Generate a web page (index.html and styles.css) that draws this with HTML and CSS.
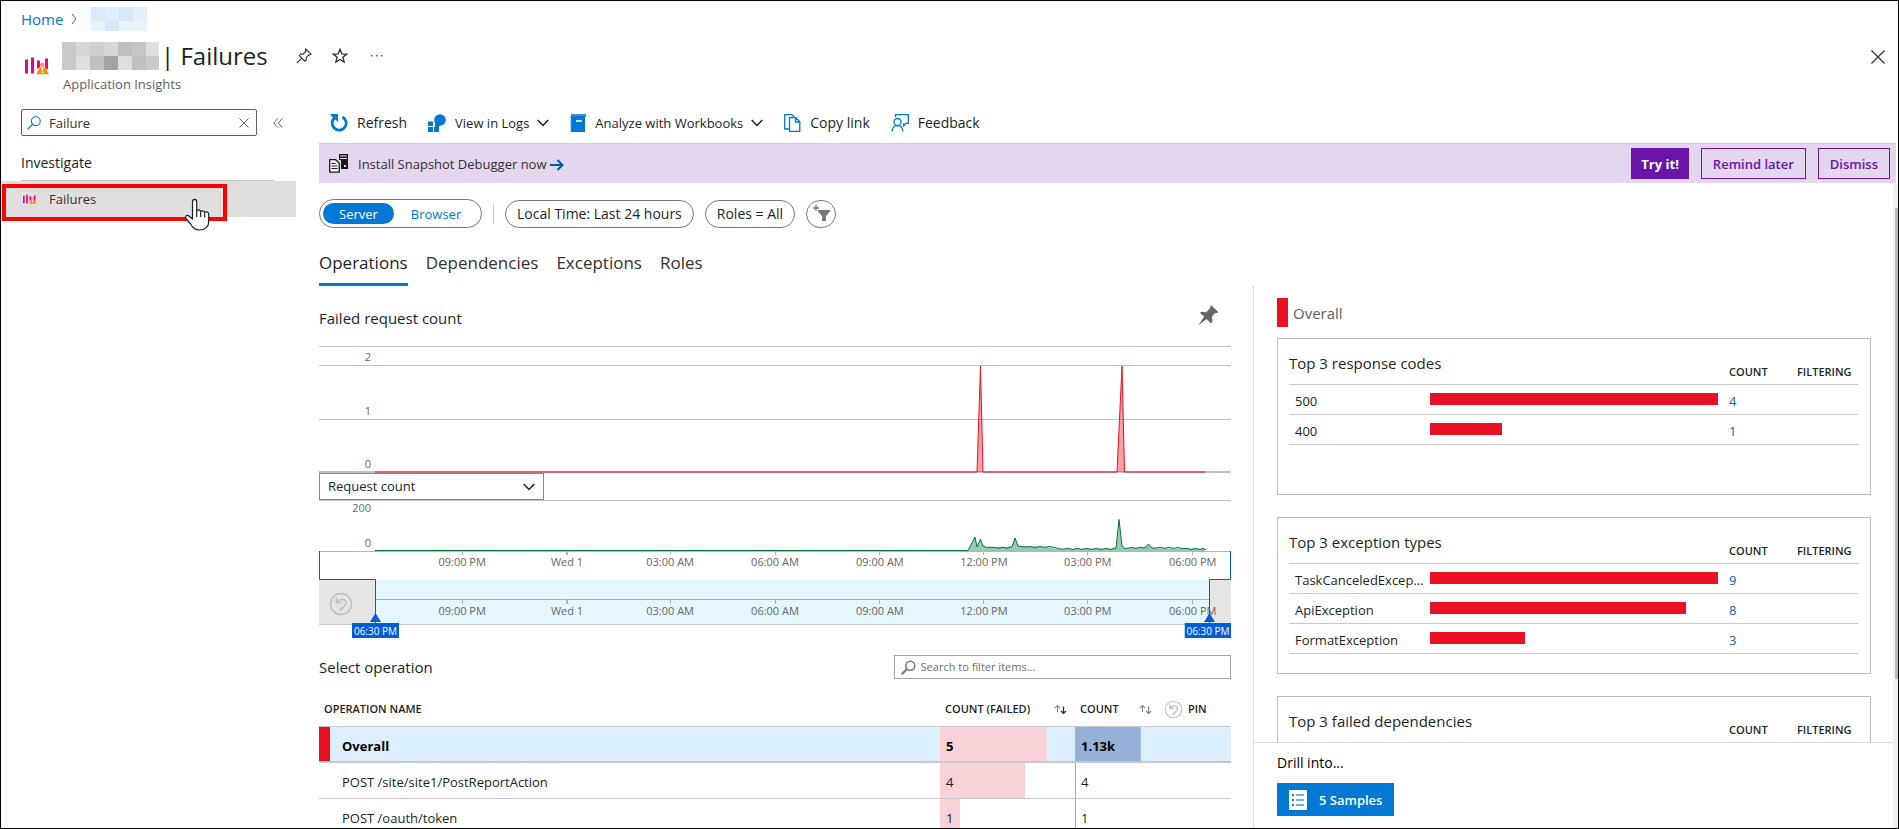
FILE: index.html
```html
<!DOCTYPE html>
<html lang="en">
<head>
<meta charset="utf-8">
<title>Failures - Application Insights</title>
<link rel="stylesheet" href="styles.css">
</head>
<body>
<svg class="defs" aria-hidden="true">
  <defs>
    <symbol id="i-insights" viewBox="0 0 24 18">
      <path fill="#ec008c" d="M0 3h3v14H0zM6 1h3v16H6zM12 4h3v8h-3zM15 8l2.500-2 2 2-2 2zM20 2h3v11h-3z"/>
      <path fill="#ff8c00" stroke="#fff" stroke-width=".5" d="M17.500 6.500L24 17q0 1-1 1H12q-1.200 0-.8-1z"/>
      <path stroke="#fff" stroke-width="1.600" d="M17.500 10v4M17.500 15v1.500"/>
    </symbol>
    <symbol id="i-chevron" viewBox="0 0 12 8"><path fill="none" stroke="#201f1e" stroke-width="1.500" d="M.7 1l5.300 5.500L11.300 1"/></symbol>
    <symbol id="i-sort" viewBox="0 0 13 9"><path fill="none" stroke="#8a8886" stroke-width="1.100" d="M3.500 7V.8M.8 3.200L3.500.6l2.700 2.600"/><path fill="none" stroke="currentColor" stroke-width="1.300" d="M9.500 1.500v6.800M6.900 5.900l2.600 2.600 2.600-2.600"/></symbol>
    <symbol id="i-undo" viewBox="0 0 24 24"><circle cx="12" cy="12" r="10.500" fill="none" stroke="#bdbdbd" stroke-width="1.400"/><path fill="none" stroke="#bdbdbd" stroke-width="1.600" d="M7.500 5.500v5h5M7.800 10c3-3.500 9-3.500 9.200 1 0 2.500-3 4.500-6.500 7.500"/></symbol>
  </defs>
</svg>
<div class="app">
  <header class="top">
    <nav class="crumbs" aria-label="Breadcrumb">
      <a href="#">Home</a>
      <svg width="6" height="12" viewBox="0 0 6 12"><path fill="none" stroke="#605e5c" d="M1 1l4 5-4 5"/></svg>
      <svg class="crumb-mask" width="70" height="24" viewBox="0 0 70 24">
        <path fill="#f8fcfe" d="M0 0h14v24H0z"/><path fill="#d9ebf9" d="M14 0h14v14H14z"/><path fill="#deeefa" d="M28 0h14v14H28z"/><path fill="#d3e9f8" d="M42 0h14v14H42z"/><path fill="#e1f0fb" d="M56 0h14v14H56z"/><path fill="#e9f3fc" d="M14 14h14v10H14zM42 14h28v10H42z"/><path fill="#d3e8f8" d="M28 14h14v10H28z"/>
      </svg>
    </nav>
    <div class="heading">
      <svg class="brand" width="24" height="19"><use href="#i-insights"/></svg>
      <div class="heading-text">
        <div class="title-row">
          <svg width="97" height="28" viewBox="0 0 97 28">
            <path fill="#cacaca" d="M0 0h97v28H0z"/><path fill="#d6d6d6" d="M14 0h14v14H14zM42 0h14v14H42z"/><path fill="#cfcfcd" d="M28 0h14v14H28z"/><path fill="#bfbfbf" d="M56 0h14v14H56z"/><path fill="#c5c5c3" d="M70 0h14v14H70z"/><path fill="#dedede" d="M84 0h13v14H84zM14 14h14v14H14zM56 14h14v14H56z"/><path fill="#c0c0be" d="M28 14h14v14H28zM70 14h14v14H70z"/><path fill="#a3a3a3" d="M42 14h14v14H42z"/>
          </svg>
          <h1>| Failures</h1>
          <button class="icon-btn" aria-label="Pin"><svg width="16" height="16" viewBox="0 0 16 16"><path fill="none" stroke="#323130" stroke-width="1.100" d="M9.800 1l5.200 5.200-1.200.8-1-.2-2.600 2.800.2 2.400-1.500 1.200-5.600-5.600L4.600 6l2.500.2 2.700-2.700-.4-1.200zM5.800 10.200L.8 15.200"/></svg></button>
          <button class="icon-btn star" aria-label="Favorite"><svg width="16" height="16" viewBox="0 0 16 16"><path fill="none" stroke="#323130" stroke-width="1.300" d="M8 1.300l1.800 4.500 4.900.3-3.800 3.100 1.300 4.900L8 11.400l-4.200 2.700 1.300-4.900L1.300 6.100l4.900-.3z"/></svg></button>
          <button class="icon-btn" aria-label="More"><svg width="14" height="4" viewBox="0 0 14 4"><path fill="#605e5c" d="M1 1h1.500v1.500H1zM6 1h1.500v1.500H6zM11 1h1.500v1.500H11z"/></svg></button>
        </div>
        <p class="subtitle">Application Insights</p>
      </div>
      <button class="icon-btn close" aria-label="Close"><svg width="14" height="14" viewBox="0 0 14 14"><path stroke="#323130" stroke-width="1.200" d="M.5.500l13 13M13.500.500l-13 13"/></svg></button>
    </div>
  </header>

  <div class="body">
    <aside class="side">
      <div class="side-search">
        <label class="search-box">
          <svg width="14" height="14" viewBox="0 0 14 14"><circle cx="8.800" cy="5.200" r="4.400" fill="none" stroke="#0078d4" stroke-width="1.100"/><path stroke="#0078d4" stroke-width="1.300" d="M5.600 8.400L.6 13.400"/></svg>
          <input type="text" value="Failure" aria-label="Search menu">
          <button class="icon-btn" aria-label="Clear"><svg width="10" height="10" viewBox="0 0 10 10"><path stroke="#605e5c" d="M.5.500l9 9M9.500.500l-9 9"/></svg></button>
        </label>
        <button class="icon-btn" aria-label="Collapse menu"><svg width="10" height="10" viewBox="0 0 10 10"><path fill="none" stroke="#605e5c" d="M4.700.5L.7 5l4 4.500M9.300.5l-4 4.500 4 4.500"/></svg></button>
      </div>
      <h2 class="side-group">Investigate</h2>
      <a class="side-item" href="#">
        <svg width="13" height="10"><use href="#i-insights"/></svg>
        <span>Failures</span>
      </a>
      <div class="callout"></div>
      <svg class="pointer" width="26" height="34" viewBox="0 0 26 34"><path fill="#fff" stroke="#1b1b2f" stroke-width="1.200" stroke-linejoin="round" d="M8.500 21V4c0-3.400 4.200-3.400 4.200 0v10c0-3 4-2.600 4 .5 0-2.500 4-2.200 4 .8 0-2.300 4-2 4 1V24c0 5-4 8-9.500 8-4.500 0-7-3-8.700-6L2 20.500c-1.600-2.600 1.500-4.200 3.300-2.200zM12.700 14v5M16.700 15v4M20.700 16v3.500"/></svg>
    </aside>

    <main class="main">
      <div class="toolbar">
        <button><svg width="18" height="18" viewBox="0 0 18 18"><path fill="none" stroke="#0078d4" stroke-width="2.800" d="M12.500 3a7 7 0 1 1-7.500.5"/><path fill="#0078d4" d="M0 0h8v8L5.500 5.500 3 4z"/></svg>Refresh</button>
        <button><svg width="18" height="18" viewBox="0 0 18 18"><circle cx="12" cy="6" r="5.800" fill="#0078d4"/><path fill="#0078d4" d="M7 8l5 3-1 2H7zM0 7.500h5v4.500H0zM0 13h5v5H0zM6 13h5v5H6z"/></svg><span class="drop">View in Logs <svg width="12" height="8"><use href="#i-chevron"/></svg></span></button>
        <button><svg width="16" height="18" viewBox="0 0 16 18"><path fill="#3593e0" d="M1 0h15v3H1z"/><path fill="#0078d4" d="M1 2h14v16H1z"/><path stroke="#3ba0ec" stroke-width="1.200" stroke-dasharray="1.500 1.500" d="M1 3v14"/><path fill="#cfe6f8" d="M6 6h6v2H6z"/></svg><span class="drop">Analyze with Workbooks <svg width="12" height="8"><use href="#i-chevron"/></svg></span></button>
        <button><svg width="17" height="18" viewBox="0 0 17 18"><path fill="none" stroke="#0078d4" stroke-width="1.300" d="M5 15H.7V.7H8l2.500 2.500M5.500 3.700h6.300l4 4v9.600H5.500zM11.500 3.700V8h4.300"/></svg>Copy link</button>
        <button><svg width="18" height="18" viewBox="0 0 18 18"><path fill="none" stroke="#0078d4" stroke-width="1.300" d="M4.500 3V.7h12.800v8.600h-2l-2.600 2.500V9.300M1 17.500c.3-8 10.200-8 11 0"/><circle cx="6.500" cy="8" r="3.500" fill="#fff" stroke="#0078d4" stroke-width="1.300"/></svg>Feedback</button>
      </div>

      <div class="banner">
        <svg width="19" height="19" viewBox="0 0 19 19"><path fill="#1b1a19" d="M10 0h9v15h-7V6h-2z"/><path fill="#e4d6ef" d="M11 1.500h7v1h-7zM11 4h7v1h-7zM15 11h2v2h-2z"/><path fill="#fff" stroke="#1b1a19" stroke-width="1.300" d="M.7 5.700h6l3.500 3.500v9H.7z"/><path stroke="#1b1a19" d="M2.500 9.500h4M2.500 12h6M2.500 14.500h6"/></svg>
        <a href="#">Install Snapshot Debugger now <svg width="14" height="12" viewBox="0 0 14 12"><path fill="none" stroke="#0058ad" stroke-width="2" d="M0 6h12M7.500 1l5 5-5 5"/></svg></a>
        <button class="try">Try it!</button>
        <button>Remind later</button>
        <button>Dismiss</button>
      </div>

      <div class="scroller">
        <div class="content">
          <div class="filters">
            <div class="toggle"><button class="on">Server</button><button>Browser</button></div>
            <span class="sep"></span>
            <button class="pill">Local Time: Last 24 hours</button>
            <button class="pill">Roles = All</button>
            <button class="pill add" aria-label="Add filter"><svg width="17" height="17" viewBox="0 0 17 17"><path stroke="#797775" stroke-width="1.400" d="M0 3h6M3 0v6"/><path fill="#797775" d="M5 5h12v1.500L13 11v5h-4v-5L5 6.500z"/></svg></button>
          </div>
          <nav class="tabs">
            <a class="current" href="#">Operations</a><a href="#">Dependencies</a><a href="#">Exceptions</a><a href="#">Roles</a>
          </nav>

          <div class="split">
            <section class="left">
              <div class="chart-head">
                <h3>Failed request count</h3>
                <button class="icon-btn" aria-label="Pin chart"><svg width="21" height="21" viewBox="0 0 21 21"><path fill="#666" d="M13 0l7.500 7.200-1.300.7-2 0-3.400 4.100.8 4.200-1.800 2-4.200-4.300L.300 20.500l5.800-8.800L2 8l1.200-1.200 5 .4 3.600-3.700z"/></svg></button>
              </div>
              <svg class="chart" height="127">
                <g class="grid-lines"><rect y="0" width="100%" height="1"/><rect y="19" width="100%" height="1"/><rect y="73" width="100%" height="1"/><rect y="125" width="100%" height="2"/></g>
                <svg width="100%" height="127" viewBox="0 0 912 127" preserveAspectRatio="none">
                  <path fill="#e81123" fill-opacity=".4" d="M658 126l3.500-106 2.500 106zM798 126l5-106 2.500 106z"/>
                  <path class="line-red" d="M56 126H658l3.500-106L664 126H798l5-106 2.500 106H886"/>
                </svg>
                <g class="axis end"><text x="52" y="15">2</text><text x="52" y="69">1</text><text x="52" y="122">0</text></g>
              </svg>
              <select class="metric" aria-label="Metric"><option>Request count</option></select>
              <svg class="chart" height="140">
                <g class="grid-lines"><rect y="0" width="100%" height="1"/></g>
                <rect x="0" y="80" width="100%" height="44" fill="#e5e5e5"/>
                <rect x="0" y="124" width="100%" height="1" fill="#c8c8c8"/>
                <svg width="100%" height="140" viewBox="0 0 912 140" preserveAspectRatio="none">
                  <path fill="#e5f7fe" d="M56 80h834v44H56z"/>
                  <path fill="#b5b5b5" d="M0 51h912v1H0z"/>
                  <path fill="#9cb4c0" d="M56 99h834v1H56z"/>
                  <path class="ticks" d="M143.500 52v3M351.500 52v3M456.500 52v3M560.500 52v3M664.500 52v3M768.500 52v3M873.500 52v3"/>
                  <path class="ticks blue" d="M143.500 99v5M351.500 99v5M456.500 99v5M560.500 99v5M664.500 99v5M768.500 99v5M873.500 99v5"/>
                  <path class="ticks wide" d="M248 52v3M248 99v5"/>
                  <path fill="#00783c" fill-opacity=".4" d="M649 51L656 37L658 47L661.500 39L664 46L667 47.500L693 46.500L696 38L699 46L728 47L738 49L797 48.500L800 19.500L803 46L806 48.500L826 47.500L829 44L833 48L886 49V51z"/>
                  <path class="line-green" d="M56 50.500H649L656 37L658 47L661.500 39L664 46L667 47.300H676L679 48.300L684 47.300L688 48.300L693 46.800L696 38L699 46L703 46.800L707 47L711 46.500L716 47.500L721 46.500L726 47.300L730 46.500L735 47.300L739 48.500L744 49.300L749 48.300L754 49.500L758 48.300L763 49.500L768 48.300L772 49.500L777 48.500L782 49.500L787 48.500L792 49.500L795 48.300H797L800 19.500L803 46L806 48.500L813 47.500L817 48.300L821 47.300L826 48L829.500 44L833 48H837L841 47.300L846 48.300L850 47.300L854 48.300L859 47.500L863 48.500H868L872 49.500L877 48.500L881 49.500L884 48.500L887 49.500"/>
                  <path class="bracket" d="M.500 51V79.500H56.500V124M911.500 51V79.500H890.500V124"/>
                  <path fill="#015cda" d="M51 122l5.500-9 5.500 9zM885 122l5.500-9 5.500 9z"/>
                </svg>
                <g class="axis end"><text x="52" y="12">200</text><text x="52" y="47">0</text></g>
                <g class="axis mid">
                  <text x="15.700%" y="66">09:00 PM</text><text x="27.200%" y="66">Wed 1</text><text x="38.500%" y="66">03:00 AM</text><text x="50%" y="66">06:00 AM</text><text x="61.500%" y="66">09:00 AM</text><text x="72.900%" y="66">12:00 PM</text><text x="84.300%" y="66">03:00 PM</text><text x="95.800%" y="66">06:00 PM</text>
                  <text x="15.700%" y="115">09:00 PM</text><text x="27.200%" y="115">Wed 1</text><text x="38.500%" y="115">03:00 AM</text><text x="50%" y="115">06:00 AM</text><text x="61.500%" y="115">09:00 AM</text><text x="72.900%" y="115">12:00 PM</text><text x="84.300%" y="115">03:00 PM</text><text x="95.800%" y="115">06:00 PM</text>
                </g>
                <svg x="33" y="123" width="47" height="15"><rect width="47" height="15" fill="#015cda"/><text class="flag" x="50%" y="12">06:30 PM</text></svg>
                <svg x="94.900%" y="123" width="47" height="15"><rect width="47" height="15" fill="#015cda"/><text class="flag" x="50%" y="12">06:30 PM</text></svg>
                <svg x="10" y="92" width="24" height="24"><use href="#i-undo"/></svg>
              </svg>

              <div class="select-row">
                <h3>Select operation</h3>
                <label class="filter-box">
                  <svg width="15" height="15" viewBox="0 0 15 15"><circle cx="9.300" cy="5.700" r="4.500" fill="none" stroke="#7a7a7a" stroke-width="1.600"/><path stroke="#7a7a7a" stroke-width="2.200" d="M6 9L.8 14.200"/></svg>
                  <input type="text" placeholder="Search to filter items..." aria-label="Search to filter items">
                </label>
              </div>
              <table class="ops">
                <colgroup><col><col class="c-failed"><col class="c-count"><col class="c-pin"></colgroup>
                <thead><tr>
                  <th>OPERATION NAME</th>
                  <th><span class="th">COUNT (FAILED) <svg class="sort active" width="13" height="9"><use href="#i-sort"/></svg></span></th>
                  <th><span class="th">COUNT <svg class="sort" width="13" height="9"><use href="#i-sort"/></svg></span></th>
                  <th><span class="th pin"><svg width="19" height="19"><use href="#i-undo"/></svg>PIN</span></th>
                </tr></thead>
                <tbody>
                  <tr class="selected"><td>Overall</td><td class="failed" style="--share:79%">5</td><td class="count" style="--share:74%">1.13k</td><td></td></tr>
                  <tr><td>POST /site/site1/PostReportAction</td><td class="failed" style="--share:63%">4</td><td class="count" style="--share:1px">4</td><td></td></tr>
                  <tr><td>POST /oauth/token</td><td class="failed" style="--share:15%">1</td><td class="count" style="--share:1px">1</td><td></td></tr>
                </tbody>
              </table>
            </section>

            <aside class="panel">
              <div class="panel-scroll">
                <div class="overall">Overall</div>
                <div class="card"><table>
                  <colgroup><col class="k-name"><col><col class="k-count"><col class="k-filter"></colgroup>
                  <thead><tr><th colspan="2" class="card-title">Top 3 response codes</th><th>COUNT</th><th>FILTERING</th></tr></thead>
                  <tbody>
                    <tr><td>500</td><td><div class="bar" style="width:100%"></div></td><td><a href="#">4</a></td><td></td></tr>
                    <tr><td>400</td><td><div class="bar" style="width:25%"></div></td><td><a href="#">1</a></td><td></td></tr>
                  </tbody></table></div>
                <div class="card"><table>
                  <colgroup><col class="k-name"><col><col class="k-count"><col class="k-filter"></colgroup>
                  <thead><tr><th colspan="2" class="card-title">Top 3 exception types</th><th>COUNT</th><th>FILTERING</th></tr></thead>
                  <tbody>
                    <tr><td>TaskCanceledExcep...</td><td><div class="bar" style="width:100%"></div></td><td><a href="#">9</a></td><td></td></tr>
                    <tr><td>ApiException</td><td><div class="bar" style="width:89%"></div></td><td><a href="#">8</a></td><td></td></tr>
                    <tr><td>FormatException</td><td><div class="bar" style="width:33%"></div></td><td><a href="#">3</a></td><td></td></tr>
                  </tbody></table></div>
                <div class="card"><table>
                  <colgroup><col class="k-name"><col><col class="k-count"><col class="k-filter"></colgroup>
                  <thead><tr><th colspan="2" class="card-title">Top 3 failed dependencies</th><th>COUNT</th><th>FILTERING</th></tr></thead>
                  </table></div>
              </div>
              <footer class="drill">
                <p>Drill into...</p>
                <button><svg width="18" height="20" viewBox="0 0 18 20"><path fill="#fff" d="M0 0h18v20H0z"/><path stroke="#3f9fd0" stroke-width="1.400" d="M7 5h8M7 10h8M7 15h8"/><path fill="#1b7fc0" d="M3 4h2v2H3zM3 9h2v2H3zM3 14h2v2H3z"/></svg>5 Samples</button>
              </footer>
            </aside>
          </div>
        </div>
        <div class="scrollbar"><div class="thumb"></div></div>
      </div>
    </main>
  </div>
</div>
</body>
</html>
```
FILE: styles.css
```css
* { box-sizing: border-box; }
body {
  margin: 0;
  font-family: "Open Sans", "Noto Sans", sans-serif;
  font-size: 13px;
  line-height: 20px;
  color: #201f1e;
  background: #fff;
}
h1, h2, h3, p { margin: 0; font-weight: 400; }
svg { flex: none; }
a { color: #0078d4; text-decoration: none; }
button, input, select { font: inherit; color: inherit; margin: 0; }
button { background: none; border: 0; padding: 0; }
.defs { position: absolute; width: 0; height: 0; }
.icon-btn { display: flex; align-items: center; justify-content: center; }

.app {
  display: flex;
  flex-direction: column;
  height: 100vh;
  border: 1px solid #000;
  overflow: hidden;
}

/* Header */
.crumbs { display: flex; align-items: center; gap: 8px; height: 36px; padding-left: 20px; font-size: 15px; }
.crumb-mask { margin-left: -8px; }
.heading { display: flex; align-items: flex-start; padding: 0 13px 0 24px; height: 71px; }
.brand { margin-top: 19px; }
.heading-text { flex: 1; padding-left: 13px; }
.title-row { display: flex; align-items: center; height: 37px; }
h1 { font-size: 24px; line-height: 32px; margin: 0 28px 0 2px; }
.star { margin: 0 22px 0 20px; }
.subtitle { padding-left: 1px; font-size: 13px; color: #605e5c; }
.close { margin-top: 13px; }

.body { display: flex; flex: 1; min-height: 0; }

/* Left menu */
.side { position: relative; width: 295px; flex: none; }
.side-search { display: flex; align-items: center; gap: 16px; padding: 1px 0 0 20px; }
.search-box {
  display: flex; align-items: center; gap: 8px;
  width: 236px; height: 27px; padding: 0 7px 0 5px;
  border: 1px solid #605e5c; border-radius: 2px;
}
.search-box input { flex: 1; min-width: 0; border: 0; padding: 0; outline: 0; background: none; color: #323130; }
.side-group { margin: 16px 22px 0 20px; height: 29px; border-bottom: 1px solid #c8c6c4; font-size: 14px; line-height: 22px; font-weight: 500; }
.side-item {
  display: flex; align-items: center; gap: 13px;
  height: 36px; padding-left: 22px;
  background: #e1dfdd; color: #323130;
}
.callout { position: absolute; left: 1px; top: 76px; width: 225px; height: 37px; border: 4px solid #f00; }
.pointer { position: absolute; left: 183px; top: 90px; }

/* Command bar */
.main { flex: 1; min-width: 0; display: flex; flex-direction: column; padding-left: 23px; }
.toolbar { display: flex; align-items: center; gap: 21px; height: 35px; padding: 0 0 5px 11px; }
.toolbar button { display: flex; align-items: center; gap: 9px; font-size: 14px; }
.drop { display: flex; align-items: center; gap: 8px; font-size: 13px; }
.banner {
  display: flex; align-items: center; gap: 12px;
  height: 40px; margin-right: 2px; padding: 0 6px 0 10px;
  border-top: 1px solid #d2d0ce; background: #e4d6ef;
}
.banner > svg { margin-right: -2px; }
.banner a { flex: 1; color: #323130; }
.banner a svg { vertical-align: -2px; }
.banner button { height: 31px; padding: 0 11px; border: 1px solid #6915aa; color: #6915aa; font-weight: 600; }
.banner .try { background: #6915aa; color: #fff; padding: 0 9px; font-weight: 700; }

.scroller { flex: 1; min-height: 0; display: flex; }
.content { flex: 1; min-width: 0; display: flex; flex-direction: column; }
.scrollbar { width: 5px; padding: 25px 0 0 2px; background: #f0f0f0; }
.thumb { height: 76%; background: #b9b9b9; }

/* Filters */
.filters { display: flex; align-items: center; padding-top: 16px; height: 45px; gap: 11px; }
.toggle { display: flex; width: 163px; height: 29px; padding: 3px; border: 1px solid #797775; border-radius: 15px; }
.toggle button { flex: 1; color: #0078d4; border-radius: 12px; }
.toggle .on { flex: none; width: 71px; background: #0078d4; color: #fff; }
.sep { width: 1px; height: 20px; background: #c8c6c4; }
.pill { height: 28px; padding: 0 11px; border: 1px solid #797775; border-radius: 14px; font-size: 14px; }
.pill.add { width: 30px; padding: 0; display: flex; align-items: center; justify-content: center; }
.tabs { display: flex; gap: 18px; height: 58px; padding-top: 23px; }
.tabs a { height: 35px; line-height: 24px; font-size: 17px; color: #323130; }
.tabs .current { border-bottom: 3px solid #0078d4; font-weight: 500; color: #201f1e; }

.split { flex: 1; min-height: 0; display: grid; grid-template: minmax(0, 1fr) / 934fr 640fr; }
.left { min-width: 0; padding-right: 22px; overflow: hidden; }
h3 { font-size: 15px; }
.chart-head { display: flex; align-items: center; justify-content: space-between; height: 60px; padding: 0 12px 0 0; }
.chart-head h3 { padding-top: 3px; }
.chart-head .icon-btn { margin-bottom: 2px; }
.chart { display: block; width: 100%; }
.grid-lines { fill: #c0c0c0; }
.line-red { fill: none; stroke: #e81123; stroke-width: 1; }
.line-green { fill: none; stroke: #00783c; stroke-width: 1; }
.ticks { stroke: #b5b5b5; }
.ticks.blue { stroke: #9cb4c0; }
.ticks.wide { stroke-width: 2; }
.bracket { fill: none; stroke: #015cda; }
.axis { font-size: 11px; fill: #666; }
.end { text-anchor: end; }
.mid { text-anchor: middle; }
.flag { font-size: 10px; fill: #fff; text-anchor: middle; }
.metric {
  display: block; width: 225px; height: 27px; padding: 0 8px 2px;
  border: 1px solid #8a8886; border-radius: 0; appearance: none; line-height: 20px;
  background: #fff url("data:image/svg+xml,%3Csvg xmlns='http://www.w3.org/2000/svg' width='12' height='8'%3E%3Cpath fill='none' stroke='%23201f1e' stroke-width='1.5' d='M.7 1l5.300 5.500L11.300 1'/%3E%3C/svg%3E") no-repeat right 8px center;
}

/* Operations table */
.select-row { display: flex; align-items: center; justify-content: space-between; padding-top: 15px; }
.filter-box { display: flex; align-items: center; gap: 5px; width: 37%; height: 24px; padding: 0 6px; border: 1px solid #a6a6a6; }
.filter-box input { flex: 1; min-width: 0; border: 0; padding: 0; outline: 0; background: none; font-size: 11px; }
.filter-box input::placeholder { color: #6e6e6e; opacity: 1; }
table { border-collapse: separate; border-spacing: 0; table-layout: fixed; width: 100%; }
th { text-align: left; font-size: 11px; font-weight: 600; }
td { padding: 0; }
.c-failed { width: 135px; }
.c-count { width: 89px; }
.c-pin { width: 67px; }
.ops { margin-top: 13px; }
.ops th { height: 35px; padding: 0 12px 0 5px; border-bottom: 1px solid #c8c8c8; }
.ops th:first-child { padding: 0 5px; }
.ops th:nth-child(2) { padding-right: 8px; }
.ops th:last-child { padding: 0; }
.th { display: flex; align-items: center; justify-content: space-between; white-space: nowrap; }
.th.pin { justify-content: flex-start; gap: 5px; }
.sort { color: #8a8886; }
.sort.active { color: #323130; }
.ops td { height: 36px; padding: 2px 0 0 6px; border-bottom: 1px solid #c8c8c8; }
.ops td:first-child { padding-left: 23px; }
.ops .selected td { background-color: #dceffe; border-bottom: 2px solid #c8c8c8; padding-top: 3px; font-weight: 700; color: #000; }
.ops .selected td:first-child { box-shadow: inset 11px 0 #e81123; }
.ops .failed { background-image: linear-gradient(#f8d2d6, #f8d2d6); background-size: var(--share) 100%; background-repeat: no-repeat; }
.ops .count { background-image: linear-gradient(#96b1d7, #96b1d7); background-size: var(--share) 100%; background-repeat: no-repeat; }

/* Right panel */
.panel { min-width: 0; display: flex; flex-direction: column; border-left: 1px solid #dcdcdc; }
.panel-scroll { flex: 1; min-height: 0; overflow: hidden; padding: 12px 22px 0 23px; }
.overall { height: 29px; line-height: 31px; margin-bottom: 11px; padding-left: 5px; border-left: 11px solid #e81123; font-size: 15px; color: #605e5c; }
.card { min-height: 157px; margin-bottom: 22px; padding: 0 12px 0 11px; border: 1px solid #bdbdbd; }
.k-name { width: 141px; }
.k-count { width: 68px; }
.k-filter { width: 61px; }
.card th { height: 46px; padding: 20px 0 0; border-bottom: 1px solid #c8c8c8; }
.card .card-title { padding: 2px 0 0; font-size: 15px; font-weight: 400; }
.card td { height: 30px; padding-top: 3px; border-bottom: 1px solid #c8c8c8; }
.card td:first-child { padding-left: 6px; white-space: nowrap; }
.card td:nth-child(2) { padding: 0 11px 2px 0; }
.card td a { color: #1160b7; }
.bar { height: 12px; background: #e81123; }
.drill { height: 86px; padding: 10px 23px; border-top: 1px solid #dcdcdc; font-size: 14px; color: #000; }
.drill button { display: flex; align-items: center; gap: 12px; height: 33px; margin-top: 10px; padding: 0 12px; background: #0078d4; color: #fff; font-size: 13px; font-weight: 600; }
```
